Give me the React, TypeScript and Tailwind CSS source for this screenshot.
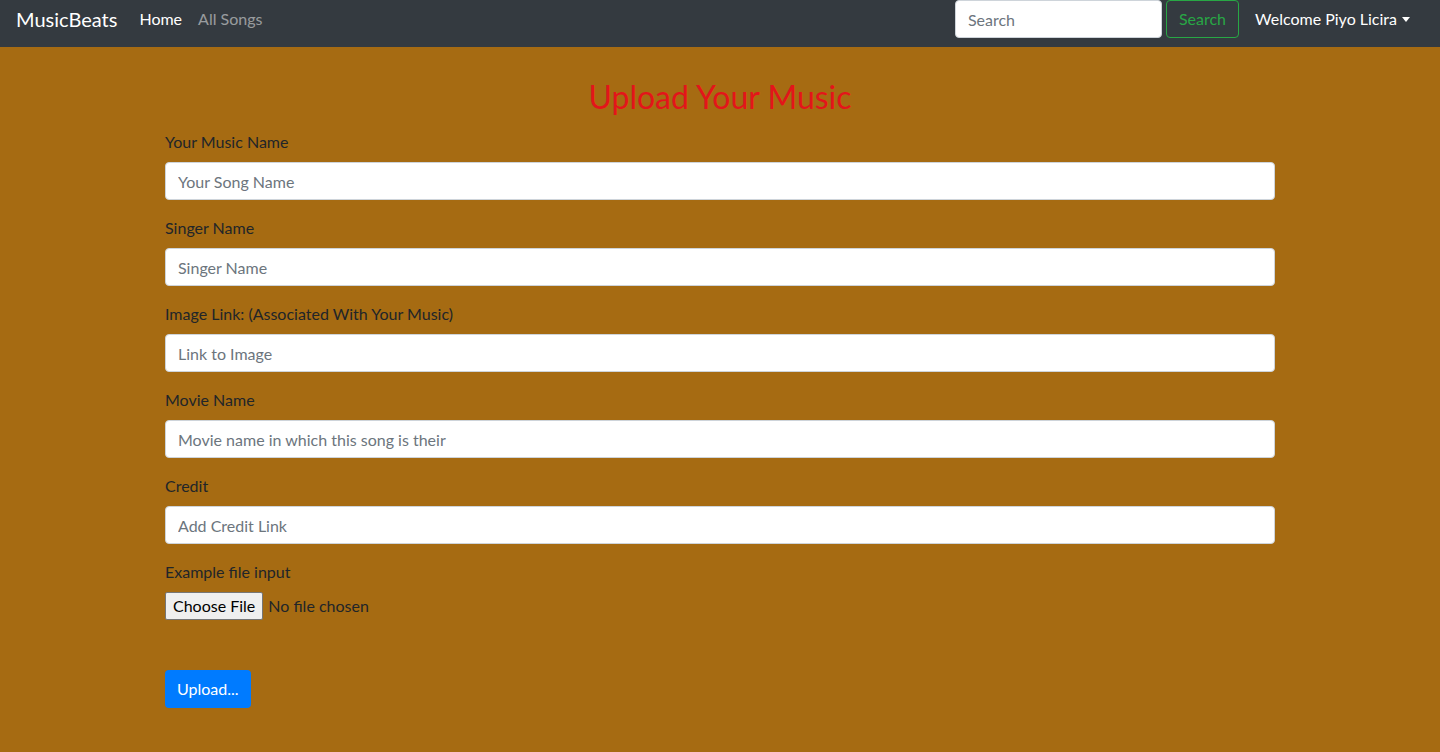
import React from "react";

const fields = [
  { label: "Your Music Name", placeholder: "Your Song Name" },
  { label: "Singer Name", placeholder: "Singer Name" },
  { label: "Image Link: (Associated With Your Music)", placeholder: "Link to Image" },
  { label: "Movie Name", placeholder: "Movie name in which this song is their" },
  { label: "Credit", placeholder: "Add Credit Link" },
];

const Navbar: React.FC = () => (
  <nav className="h-[47px] bg-[#343a40] flex items-start px-4">
    <div className="h-[38px] flex items-center w-full">
      <a href="#" className="text-[20px] text-white mr-[22px]">
        MusicBeats
      </a>
      <a href="#" className="text-white mr-4">
        Home
      </a>
      <a href="#" className="text-[rgba(255,255,255,0.5)]">
        All Songs
      </a>
      <div className="ml-auto flex items-center">
        <input
          type="text"
          placeholder="Search"
          className="w-[207px] h-[38px] rounded bg-white border border-[#ced4da] px-3 text-[#495057] placeholder:text-[#6c757d] outline-none"
        />
        <button className="ml-1 h-[38px] px-3 rounded border border-[#28a745] text-[#28a745]">
          Search
        </button>
        <div className="ml-4 mr-[14px] flex items-center text-white">
          Welcome Piyo Licira
          <span className="ml-[5px] w-0 h-0 border-l-[4px] border-r-[4px] border-t-[5px] border-l-transparent border-r-transparent border-t-white" />
        </div>
      </div>
    </div>
  </nav>
);

export default function App() {
  return (
    <div className="min-h-[752px] bg-[#a66b12] text-[#212529] text-[16px] font-['Lato','Liberation_Sans',sans-serif]">
      <Navbar />
      <div className="w-[1140px] mx-auto px-[15px] pt-[31px] pb-[43px]">
        <h2 className="text-center text-[32px] leading-[1.2] text-[#e3151a] mb-[14px]">
          Upload Your Music
        </h2>
        {fields.map((f) => (
          <div key={f.label} className="mb-4">
            <label className="block mb-2 leading-6">{f.label}</label>
            <input
              type="text"
              placeholder={f.placeholder}
              className="w-full h-[38px] rounded bg-white border border-[#ced4da] px-3 text-[#495057] placeholder:text-[#6c757d] outline-none"
            />
          </div>
        ))}
        <div className="mb-[50px]">
          <label className="block mb-2 leading-6">Example file input</label>
          <div className="flex items-center">
            <button className="h-[28px] px-[7px] bg-[#efefef] border border-[#767676] rounded-[2px] text-black text-[16px]">
              Choose File
            </button>
            <span className="ml-[5px]">No file chosen</span>
          </div>
        </div>
        <button className="h-[38px] px-3 rounded bg-[#007bff] text-white">
          Upload...
        </button>
      </div>
    </div>
  );
}
